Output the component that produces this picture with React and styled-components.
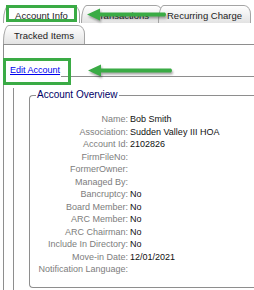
import React from 'react';
import styled, { createGlobalStyle } from 'styled-components';

const GlobalStyle = createGlobalStyle`
  html, body {
    margin: 0;
    padding: 0;
    background: #ffffff;
  }
  body {
    width: 254px;
    height: 290px;
    overflow: hidden;
    font-family: "Liberation Sans", Arial, sans-serif;
  }
`;

const Page = styled.div`
  position: relative;
  box-sizing: border-box;
  width: 254px;
  height: 290px;
  padding: 5px 0 0 3px;
  overflow: hidden;
`;

const TabRow = styled.div`
  display: flex;
  height: ${p => p.$h}px;
  margin-bottom: ${p => p.$gap || 0}px;
`;

const Tab = styled.div`
  position: relative;
  z-index: ${p => p.$z || 0};
  box-sizing: border-box;
  display: flex;
  align-items: center;
  justify-content: center;
  width: ${p => p.$w}px;
  height: 100%;
  margin-left: ${p => p.$ml || 0}px;
  padding-top: 1px;

  background: ${p => p.$active ? '#ffffff' : 'linear-gradient(#ffffff, #e3e3e3)'};
  border: 1px solid #a4a4a4;
  border-bottom: none;
  border-radius: 6px 7px 0 0 / 16px 9px 0 0;

  font-size: 9.5px;
  color: #1c1c1c;
  white-space: nowrap;
`;

const Highlight = styled.div`
  position: absolute;
  z-index: 5;
  box-sizing: border-box;
  left: ${p => p.$x}px;
  top: ${p => p.$y}px;
  width: ${p => p.$w}px;
  height: ${p => p.$h}px;
  border: 3px solid #3aab45;
  pointer-events: none;
`;

const Arrow = styled.svg`
  position: absolute;
  z-index: 6;
  left: ${p => p.$x}px;
  top: ${p => p.$y}px;
  overflow: visible;
  filter: drop-shadow(1px 2px 1.2px rgba(0, 0, 0, 0.35));
`;

const Panel = styled.div`
  width: 400px;
  height: 260px;
  border-top: 1px solid #8e8e8e;
  border-left: 1px solid #8e8e8e;
`;

const EditSet = styled.fieldset`
  min-width: 0;
  width: 400px;
  margin: 20px 0 0 9px;
  padding: 0;
  border: 1px solid #8e8e8e;
  border-right: none;
  border-bottom: none;
  border-top-left-radius: 4px;
`;

const EditLegend = styled.legend`
  margin-left: -5px;
  padding: 0 1px 12px;
  font-size: 9px;
  line-height: 11px;

  a {
    color: #0000ee;
    text-decoration: underline;
  }
`;

const OverviewSet = styled.fieldset`
  min-width: 0;
  width: 380px;
  margin: 1px 0 20px 15px;
  padding: 12px 0 11px 0;
  border: 1px solid #8e8e8e;
  border-right: none;
  border-radius: 4px 0 0 4px;
`;

const OverviewLegend = styled.legend`
  margin-left: 6px;
  padding: 0 1px;
  font-size: 10px;
  line-height: 12px;
  color: #000066;
`;

const Details = styled.div`
  display: grid;
  grid-template-columns: 98px 1fr;
  column-gap: 2px;
  font-size: 9px;
  line-height: 12.5px;
`;

const Label = styled.div`
  text-align: right;
  color: #7d7d7d;
  white-space: nowrap;
`;

const Value = styled.div`
  color: #111111;
  white-space: nowrap;
`;

const rows = [
  ['Name:', 'Bob Smith'],
  ['Association:', 'Sudden Valley III HOA'],
  ['Account Id:', '2102826'],
  ['FirmFileNo:', ''],
  ['FormerOwner:', ''],
  ['Managed By:', ''],
  ['Bancruptcy:', 'No'],
  ['Board Member:', 'No'],
  ['ARC Member:', 'No'],
  ['ARC Chairman:', 'No'],
  ['Include In Directory:', 'No'],
  ['Move-in Date:', '12/01/2021'],
  ['Notification Language:', ''],
];

function GreenArrow({ x, y, length }) {
  return (
    <Arrow $x={x} $y={y} width={length} height="13" viewBox={`0 0 ${length} 13`}>
      <path
        d={`M0 6.5 L13 0.5 L13 4.5 L${length - 2} 4.5 Q${length} 6.5 ${length - 2} 8.5 L13 8.5 L13 12.5 Z`}
        fill="#3aab45"
      />
    </Arrow>
  );
}

export default function App() {
  return (
    <Page>
      <GlobalStyle />

      <TabRow $h={18} $gap={2}>
        <Tab $w={77} $active $z={2}>Account Info</Tab>
        <Tab $w={82} $ml={1} $z={1}>Transactions</Tab>
        <Tab $w={93} $ml={-5} $z={2}>Recurring Charge</Tab>
      </TabRow>
      <TabRow $h={19}>
        <Tab $w={82}>Tracked Items</Tab>
      </TabRow>

      <Panel>
        <EditSet>
          <EditLegend>
            <a href="#edit">Edit Account</a>
          </EditLegend>

          <OverviewSet>
            <OverviewLegend>Account Overview</OverviewLegend>
            <Details>
              {rows.map(([label, value]) => (
                <React.Fragment key={label}>
                  <Label>{label}</Label>
                  <Value>{value}</Value>
                </React.Fragment>
              ))}
            </Details>
          </OverviewSet>
        </EditSet>
      </Panel>

      <Highlight $x={6} $y={5} $w={71} $h={17} />
      <Highlight $x={3} $y={58} $w={68} $h={27} />
      <GreenArrow x={87} y={8} length={80} />
      <GreenArrow x={88} y={64} length={85} />
    </Page>
  );
}
